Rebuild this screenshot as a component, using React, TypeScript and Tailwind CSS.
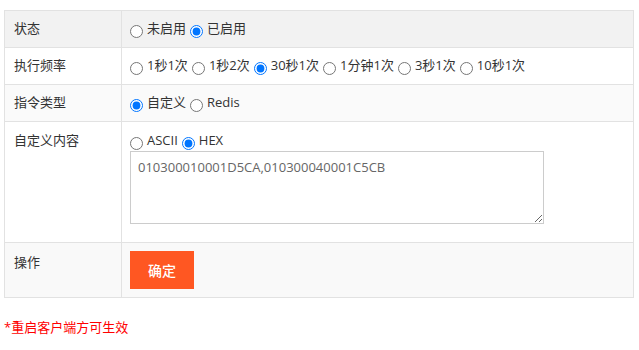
import React from "react";

const font = { fontFamily: '"Open Sans", "Noto Sans CJK SC", sans-serif' };

function Radio({ label, checked, name }: { label: string; checked?: boolean; name: string }) {
  return (
    <label className="inline-flex items-center mr-[4px] text-[13px] text-[#333]">
      <input
        type="radio"
        name={name}
        defaultChecked={checked}
        className="m-0 mr-[4px] w-[13px] h-[13px] relative top-[2px]"
      />
      <span>{label}</span>
    </label>
  );
}

export default function App() {
  return (
    <div className="bg-white w-[639px] h-[350px] pt-[10px] pl-[4px]" style={font}>
      <table className="w-[630px] border-collapse text-[13px] text-[#333]">
        <tbody>
          <tr className="bg-[#f2f2f2] h-[37px]">
            <td className="w-[117px] border border-[#e2e2e2] px-[9px] align-middle">状态</td>
            <td className="border border-[#e2e2e2] px-[8px] align-middle">
              <div className="flex items-center">
                <Radio name="s" label="未启用" />
                <Radio name="s" label="已启用" checked />
              </div>
            </td>
          </tr>
          <tr className="bg-white h-[37px]">
            <td className="border border-[#e2e2e2] px-[9px] align-middle">执行频率</td>
            <td className="border border-[#e2e2e2] px-[8px] align-middle">
              <div className="flex items-center">
                <Radio name="f" label="1秒1次" />
                <Radio name="f" label="1秒2次" />
                <Radio name="f" label="30秒1次" checked />
                <Radio name="f" label="1分钟1次" />
                <Radio name="f" label="3秒1次" />
                <Radio name="f" label="10秒1次" />
              </div>
            </td>
          </tr>
          <tr className="bg-[#fafafa] h-[37px]">
            <td className="border border-[#e2e2e2] px-[9px] align-middle">指令类型</td>
            <td className="border border-[#e2e2e2] px-[8px] align-middle">
              <div className="flex items-center">
                <Radio name="t" label="自定义" checked />
                <Radio name="t" label="Redis" />
              </div>
            </td>
          </tr>
          <tr className="bg-white h-[121px]">
            <td className="border border-[#e2e2e2] px-[9px] pt-[9px] align-top">自定义内容</td>
            <td className="border border-[#e2e2e2] px-[8px] pt-[10px] align-top">
              <div className="flex items-center h-[18px]">
                <Radio name="c" label="ASCII" />
                <Radio name="c" label="HEX" checked />
              </div>
              <textarea
                className="block mt-[1px] w-[414px] h-[73px] border border-[#ccc] px-[7px] py-[6px] text-[13px] text-[#666] bg-white outline-none"
                style={font}
                defaultValue="010300010001D5CA,010300040001C5CB"
              />
            </td>
          </tr>
          <tr className="bg-[#f9f9f9] h-[55px]">
            <td className="border border-[#e2e2e2] px-[9px] pt-[10px] align-top">操作</td>
            <td className="border border-[#e2e2e2] px-[8px] align-middle">
              <button className="w-[64px] h-[38px] bg-[#ff5722] text-white text-[14px] font-medium">确定</button>
            </td>
          </tr>
        </tbody>
      </table>
      <div className="mt-[20px] text-[13px] text-[#ff0000]">*重启客户端方可生效</div>
    </div>
  );
}
